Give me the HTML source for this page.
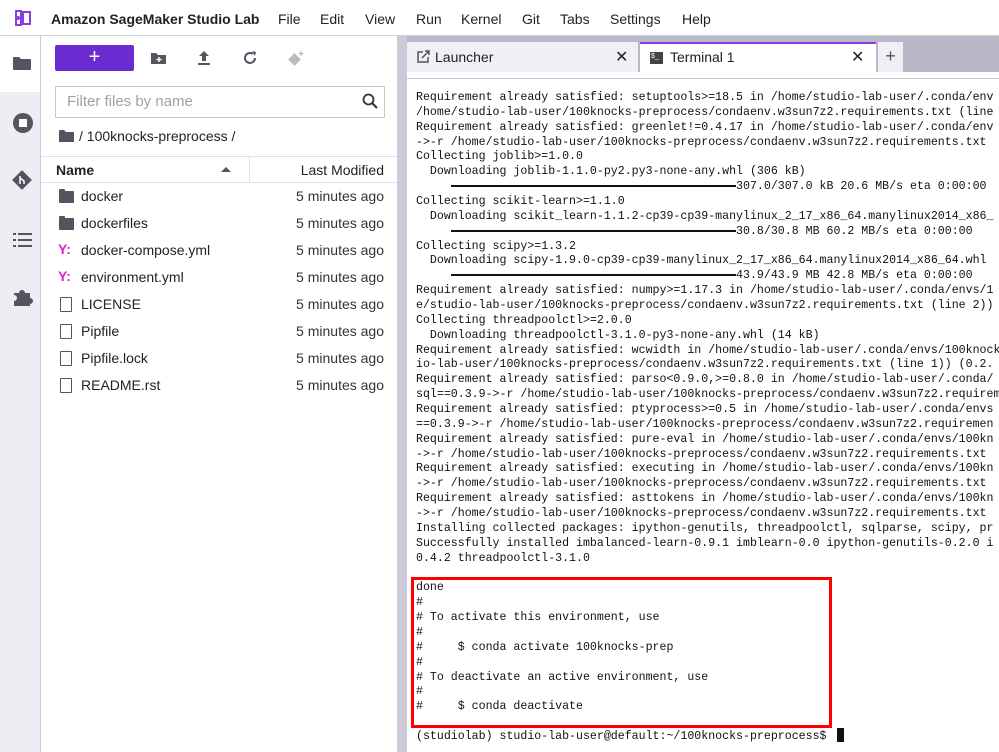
<!DOCTYPE html>
<html><head><meta charset="utf-8"><style>
*{margin:0;padding:0;box-sizing:border-box}
body{width:999px;height:752px;overflow:hidden;background:#fff;font-family:"Liberation Sans",sans-serif;color:#222;position:relative}
.abs{position:absolute}
#menu{left:0;top:0;width:999px;height:36px;border-bottom:1px solid #cfcfd6;background:#fff}
#menu span{position:absolute;top:11px;font-size:14px;color:#222}
#side{left:0;top:36px;width:40px;height:716px;background:#eeedf4}
#sideact{left:0;top:36px;width:40px;height:56px;background:#fff}
#panel{left:40px;top:36px;width:357px;height:716px;background:#fff;border-left:1px solid #ccc}
#div{left:397px;top:36px;width:10px;height:716px;background:#cbcad6}
#tabbar{left:407px;top:36px;width:592px;height:36px;background:#b9b8c8}
.tab{position:absolute;top:6px;height:30px;font-size:14px}
#term{left:407px;top:72px;width:592px;height:680px;background:#fff}
#tl{left:407px;top:78px;width:592px;height:1px;background:#c8c8d8}
pre{position:absolute;left:416px;top:91px;font-family:"Liberation Mono",monospace;font-size:11.6px;line-height:14.86px;color:#111;white-space:pre}
.bar{display:inline-block;width:41ch;height:2px;background:#111;vertical-align:middle}
.row{position:absolute;left:40px;width:357px;height:27px;font-size:14px}
.row .n{position:absolute;left:41px;top:5px}
.row .t{position:absolute;right:13px;top:5px;color:#333}
.fi{position:absolute;left:19px;top:8px;width:15px;height:12px;background:#55555f;border-radius:1px}
.fi:before{content:"";position:absolute;left:0;top:-2px;width:6px;height:3px;background:#55555f;border-radius:1px 1px 0 0}
.y{position:absolute;left:18px;top:4px;color:#e020d0;font-weight:bold;font-size:14px}
.doc{position:absolute;left:20px;top:6px;width:12px;height:15px;border:1.5px solid #555;border-radius:1px}
</style></head><body>
<div id="menu" class="abs">
<svg class="abs" style="left:13px;top:9px" width="20" height="18" viewBox="0 0 20 18"><path d="M3 2h5v14H3zM10 3h7v12h-7z" fill="none" stroke="#8a3ce0" stroke-width="2"/><circle cx="5" cy="9" r="2" fill="#8a3ce0"/></svg>
<span style="left:51px;font-weight:bold">Amazon SageMaker Studio Lab</span>
<span style="left:278px">File</span><span style="left:320px">Edit</span><span style="left:365px">View</span><span style="left:416px">Run</span><span style="left:461px">Kernel</span><span style="left:522px">Git</span><span style="left:560px">Tabs</span><span style="left:610px">Settings</span><span style="left:682px">Help</span>
</div>
<div id="side" class="abs"></div>
<div id="sideact" class="abs"></div>
<svg class="abs" style="left:12px;top:55px" width="20" height="16"><path d="M1 3a1 1 0 011-1h5l2 2h9a1 1 0 011 1v9a1 1 0 01-1 1H2a1 1 0 01-1-1z" fill="#555560"/></svg>
<svg class="abs" style="left:12px;top:112px" width="22" height="22"><circle cx="11" cy="11" r="10" fill="#555560"/><rect x="7" y="7" width="8" height="8" fill="#fff"/></svg>
<svg class="abs" style="left:11px;top:169px" width="22" height="22"><rect x="4" y="4" width="14" height="14" transform="rotate(45 11 11)" fill="#555560"/><path d="M9 7v8M9 9l4 3v3" stroke="#fff" stroke-width="1.5" fill="none"/></svg>
<svg class="abs" style="left:13px;top:232px" width="20" height="16"><g fill="#555560"><rect x="0" y="1" width="3" height="2"/><rect x="5" y="1" width="14" height="2"/><rect x="0" y="7" width="3" height="2"/><rect x="5" y="7" width="14" height="2"/><rect x="0" y="13" width="3" height="2"/><rect x="5" y="13" width="14" height="2"/></g></svg>
<svg class="abs" style="left:12px;top:287px" width="22" height="20"><path d="M2 6h5a3 3 0 016 0h5v5a3 3 0 010 6v2H2v-5a3 3 0 000-6z" fill="#555560"/></svg>
<div id="panel" class="abs">
<div class="abs" style="left:14px;top:9px;width:79px;height:26px;background:#6a2bd1;border-radius:2px;color:#fff;font-size:20px;text-align:center;line-height:25px">+</div>
<svg class="abs" style="left:109px;top:15px" width="18" height="14"><path d="M1 2h5l2 2h8v9H1z" fill="#555560"/><path d="M9 6v5M6.5 8.5h5" stroke="#fff" stroke-width="1.5"/></svg>
<svg class="abs" style="left:155px;top:14px" width="16" height="16"><path d="M8 1l5 5H10v5H6V6H3zM2 13h12v2H2z" fill="#555560"/></svg>
<svg class="abs" style="left:201px;top:14px" width="16" height="16"><path d="M13 8a5 5 0 11-2-4" fill="none" stroke="#555560" stroke-width="2"/><path d="M10 1l4 1-1 4z" fill="#555560"/></svg>
<svg class="abs" style="left:246px;top:14px" width="18" height="18"><rect x="3" y="5" width="9" height="9" transform="rotate(45 7.5 9.5)" fill="#bbb"/><path d="M14 1v5M11.5 3.5h5" stroke="#bbb" stroke-width="1.2"/></svg>
<div class="abs" style="left:14px;top:50px;width:330px;height:32px;border:1px solid #c8c8c8"></div>
<div class="abs" style="left:26px;top:57px;font-size:15px;color:#a0a0a8">Filter files by name</div>
<svg class="abs" style="left:321px;top:57px" width="16" height="16"><circle cx="6.5" cy="6.5" r="5" fill="none" stroke="#333" stroke-width="1.8"/><path d="M10 10l5 5" stroke="#333" stroke-width="2"/></svg>
<svg class="abs" style="left:18px;top:93px" width="16" height="13"><path d="M0 2a1 1 0 011-1h4l2 2h8v10H0z" fill="#555560"/></svg>
<div class="abs" style="left:38px;top:92px;font-size:14px">/ 100knocks-preprocess /</div>
<div class="abs" style="left:0;top:120px;width:357px;height:27px;border-top:1px solid #e0e0e8;border-bottom:1px solid #e0e0e8"></div>
<div class="abs" style="left:208px;top:120px;width:1px;height:27px;background:#e0e0e8"></div>
<div class="abs" style="left:15px;top:126px;font-size:14px;font-weight:bold">Name</div>
<div class="abs" style="left:180px;top:131px;width:0;height:0;border-left:5px solid transparent;border-right:5px solid transparent;border-bottom:5px solid #555"></div>
<div class="abs" style="right:13px;top:126px;font-size:14px">Last Modified</div>
</div>
<div class="row" style="top:183px"><div class="fi"></div><span class="n">docker</span><span class="t">5 minutes ago</span></div>
<div class="row" style="top:210px"><div class="fi"></div><span class="n">dockerfiles</span><span class="t">5 minutes ago</span></div>
<div class="row" style="top:237px"><span class="y">Y:</span><span class="n">docker-compose.yml</span><span class="t">5 minutes ago</span></div>
<div class="row" style="top:264px"><span class="y">Y:</span><span class="n">environment.yml</span><span class="t">5 minutes ago</span></div>
<div class="row" style="top:291px"><div class="doc"></div><span class="n">LICENSE</span><span class="t">5 minutes ago</span></div>
<div class="row" style="top:318px"><div class="doc"></div><span class="n">Pipfile</span><span class="t">5 minutes ago</span></div>
<div class="row" style="top:345px"><div class="doc"></div><span class="n">Pipfile.lock</span><span class="t">5 minutes ago</span></div>
<div class="row" style="top:372px"><div class="doc"></div><span class="n">README.rst</span><span class="t">5 minutes ago</span></div>
<div id="div" class="abs"></div>
<div id="tabbar" class="abs">
<div class="tab" style="left:0;width:231px;background:#f0eff5">
<svg class="abs" style="left:9px;top:8px" width="14" height="14"><path d="M7 2H2v10h10V7M6 8l7-7M9 1h4v4" fill="none" stroke="#555" stroke-width="1.5"/></svg>
<span class="abs" style="left:28px;top:7px">Launcher</span><span class="abs" style="left:208px;top:5px;font-size:16px">✕</span></div>
<div class="tab" style="left:233px;width:236px;background:#fff;border-top:2px solid #8a3ce0">
<div class="abs" style="left:10px;top:8px;width:13px;height:12px;background:#444"><span style="color:#fff;font-size:7px;position:absolute;left:1px;top:1px">$_</span></div>
<span class="abs" style="left:30px;top:5px">Terminal 1</span><span class="abs" style="left:211px;top:3px;font-size:16px">✕</span></div>
<div class="tab" style="left:471px;width:25px;background:#f0eff5;text-align:center;font-size:18px;line-height:28px;color:#555">+</div>
</div>
<div id="term" class="abs"></div>
<div id="tl" class="abs"></div>
<pre>Requirement already satisfied: setuptools>=18.5 in /home/studio-lab-user/.conda/env
/home/studio-lab-user/100knocks-preprocess/condaenv.w3sun7z2.requirements.txt (line
Requirement already satisfied: greenlet!=0.4.17 in /home/studio-lab-user/.conda/env
->-r /home/studio-lab-user/100knocks-preprocess/condaenv.w3sun7z2.requirements.txt
Collecting joblib>=1.0.0
  Downloading joblib-1.1.0-py2.py3-none-any.whl (306 kB)
     <span class="bar"></span>307.0/307.0 kB 20.6 MB/s eta 0:00:00
Collecting scikit-learn>=1.1.0
  Downloading scikit_learn-1.1.2-cp39-cp39-manylinux_2_17_x86_64.manylinux2014_x86_
     <span class="bar"></span>30.8/30.8 MB 60.2 MB/s eta 0:00:00
Collecting scipy>=1.3.2
  Downloading scipy-1.9.0-cp39-cp39-manylinux_2_17_x86_64.manylinux2014_x86_64.whl
     <span class="bar"></span>43.9/43.9 MB 42.8 MB/s eta 0:00:00
Requirement already satisfied: numpy>=1.17.3 in /home/studio-lab-user/.conda/envs/1
e/studio-lab-user/100knocks-preprocess/condaenv.w3sun7z2.requirements.txt (line 2))
Collecting threadpoolctl>=2.0.0
  Downloading threadpoolctl-3.1.0-py3-none-any.whl (14 kB)
Requirement already satisfied: wcwidth in /home/studio-lab-user/.conda/envs/100knock
io-lab-user/100knocks-preprocess/condaenv.w3sun7z2.requirements.txt (line 1)) (0.2.
Requirement already satisfied: parso&lt;0.9.0,>=0.8.0 in /home/studio-lab-user/.conda/
sql==0.3.9->-r /home/studio-lab-user/100knocks-preprocess/condaenv.w3sun7z2.requirem
Requirement already satisfied: ptyprocess>=0.5 in /home/studio-lab-user/.conda/envs
==0.3.9->-r /home/studio-lab-user/100knocks-preprocess/condaenv.w3sun7z2.requiremen
Requirement already satisfied: pure-eval in /home/studio-lab-user/.conda/envs/100kn
->-r /home/studio-lab-user/100knocks-preprocess/condaenv.w3sun7z2.requirements.txt
Requirement already satisfied: executing in /home/studio-lab-user/.conda/envs/100kn
->-r /home/studio-lab-user/100knocks-preprocess/condaenv.w3sun7z2.requirements.txt
Requirement already satisfied: asttokens in /home/studio-lab-user/.conda/envs/100kn
->-r /home/studio-lab-user/100knocks-preprocess/condaenv.w3sun7z2.requirements.txt
Installing collected packages: ipython-genutils, threadpoolctl, sqlparse, scipy, pr
Successfully installed imbalanced-learn-0.9.1 imblearn-0.0 ipython-genutils-0.2.0 i
0.4.2 threadpoolctl-3.1.0

done
#
# To activate this environment, use
#
#     $ conda activate 100knocks-prep
#
# To deactivate an active environment, use
#
#     $ conda deactivate

(studiolab) studio-lab-user@default:~/100knocks-preprocess$ </pre>
<div class="abs" style="left:411px;top:577px;width:421px;height:151px;border:3px solid #f00"></div>
<div class="abs" style="left:837px;top:728px;width:7px;height:14px;background:#111"></div>
</body></html>
